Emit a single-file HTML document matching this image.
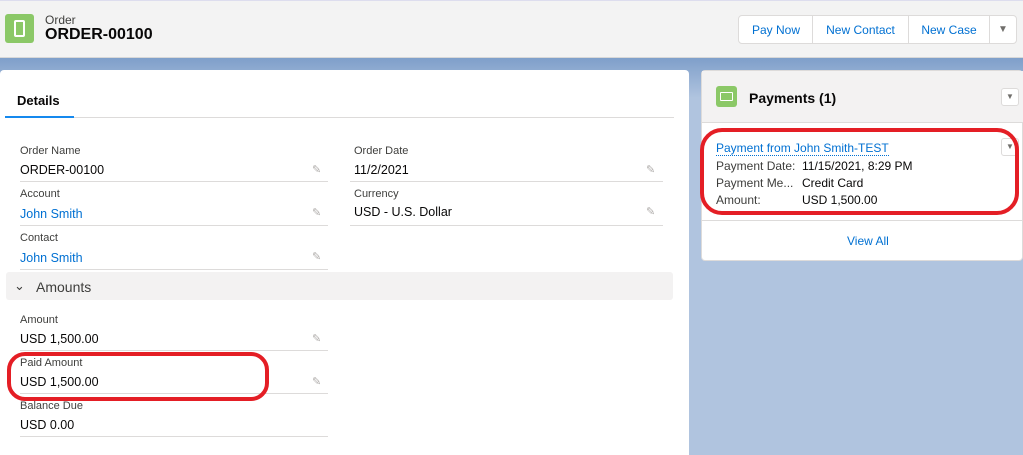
<!DOCTYPE html>
<html><head><style>
*{margin:0;padding:0;box-sizing:border-box}
body{width:1023px;height:455px;overflow:hidden;background:#b0c4df;font-family:"Liberation Sans",sans-serif;position:relative;color:#080707}
.abs{position:absolute}
.hdr{left:0;top:0;width:1023px;height:58px;background:#f3f3f3;border-bottom:1px solid #d8d8d8;border-top:1px solid #dde}
.lbl{font-size:11px;color:#3e3e3c}
.val{font-size:12.5px}
.lnk{color:#0070d2}
.line{height:1px;background:#dddbda}
.pen{font-size:11px;color:#b0adab}
.btn{top:15px;height:29px;background:#fff;border:1px solid #dddbda;font-size:12px;color:#0070d2;display:flex;align-items:center;justify-content:center}
</style></head><body>
<div class="abs" style="left:0;top:58px;width:1023px;height:40px;background:linear-gradient(#7f9fca,#b0c4df)"></div>
<div class="abs hdr"></div>
<div class="abs" style="left:5px;top:14px;width:29px;height:29px;background:#8bc867;border-radius:3px"></div>
<div class="abs" style="left:14px;top:20px;width:11px;height:17px;border:2px solid #fff;border-radius:2px"></div>
<div class="abs" style="left:45px;top:13px;font-size:12px;color:#3e3e3c">Order</div>
<div class="abs" style="left:45px;top:26px;font-size:16px;font-weight:bold">ORDER-00100</div>
<div class="abs btn" style="left:738px;width:76px;border-radius:4px 0 0 4px">Pay Now</div>
<div class="abs btn" style="left:812px;width:97px">New Contact</div>
<div class="abs btn" style="left:908px;width:82px">New Case</div>
<div class="abs btn" style="left:989px;width:28px;border-radius:0 4px 4px 0;color:#706e6b;font-size:10px">▼</div>

<div class="abs" style="left:0;top:70px;width:689px;height:385px;background:#fff;border-radius:4px 4px 0 0"></div>
<div class="abs" style="left:17px;top:93px;font-size:13px;font-weight:bold">Details</div>
<div class="abs line" style="left:5px;top:117px;width:669px"></div>
<div class="abs" style="left:5px;top:116px;width:69px;height:2px;background:#1589ee"></div>

<div class="abs lbl" style="left:20px;top:145px">Order Name</div>
<div class="abs val" style="left:20px;top:163px">ORDER-00100</div>
<div class="abs pen" style="left:312px;top:163px">✎</div>
<div class="abs line" style="left:20px;top:181px;width:308px"></div>
<div class="abs lbl" style="left:20px;top:188px">Account</div>
<div class="abs val lnk" style="left:20px;top:207px">John Smith</div>
<div class="abs pen" style="left:312px;top:206px">✎</div>
<div class="abs line" style="left:20px;top:225px;width:308px"></div>
<div class="abs lbl" style="left:20px;top:232px">Contact</div>
<div class="abs val lnk" style="left:20px;top:251px">John Smith</div>
<div class="abs pen" style="left:312px;top:250px">✎</div>
<div class="abs line" style="left:20px;top:269px;width:308px"></div>

<div class="abs lbl" style="left:354px;top:145px">Order Date</div>
<div class="abs val" style="left:354px;top:163px">11/2/2021</div>
<div class="abs pen" style="left:646px;top:163px">✎</div>
<div class="abs line" style="left:350px;top:181px;width:313px"></div>
<div class="abs lbl" style="left:354px;top:188px">Currency</div>
<div class="abs val" style="left:354px;top:205px">USD - U.S. Dollar</div>
<div class="abs pen" style="left:646px;top:205px">✎</div>
<div class="abs line" style="left:350px;top:225px;width:313px"></div>

<div class="abs" style="left:6px;top:272px;width:667px;height:28px;background:#f3f2f2;border-radius:3px"></div>
<div class="abs" style="left:14px;top:278px;font-size:13px;color:#3e3e3c">⌄</div>
<div class="abs" style="left:36px;top:279px;font-size:14px;color:#3e3e3c">Amounts</div>

<div class="abs lbl" style="left:20px;top:314px">Amount</div>
<div class="abs val" style="left:20px;top:332px">USD 1,500.00</div>
<div class="abs pen" style="left:312px;top:332px">✎</div>
<div class="abs line" style="left:20px;top:350px;width:308px"></div>
<div class="abs lbl" style="left:20px;top:357px">Paid Amount</div>
<div class="abs val" style="left:20px;top:375px">USD 1,500.00</div>
<div class="abs pen" style="left:312px;top:375px">✎</div>
<div class="abs line" style="left:20px;top:393px;width:308px"></div>
<div class="abs lbl" style="left:20px;top:400px">Balance Due</div>
<div class="abs val" style="left:20px;top:418px">USD 0.00</div>
<div class="abs line" style="left:20px;top:436px;width:308px"></div>
<div class="abs" style="left:7px;top:352px;width:262px;height:49px;border:4px solid #e41e25;border-radius:18px"></div>

<div class="abs" style="left:701px;top:70px;width:322px;height:191px;background:#fff;border:1px solid #dddbda;border-radius:4px"></div>
<div class="abs" style="left:702px;top:71px;width:321px;height:52px;background:#f3f2f2;border-bottom:1px solid #dddbda"></div>
<div class="abs" style="left:716px;top:86px;width:21px;height:21px;background:#8bc867;border-radius:3px"></div>
<div class="abs" style="left:720px;top:92px;width:13px;height:9px;border:1.5px solid #fff;border-radius:1px"></div>
<div class="abs" style="left:749px;top:90px;font-size:14px;font-weight:bold">Payments (1)</div>
<div class="abs" style="left:1001px;top:88px;width:18px;height:18px;border:1px solid #dddbda;border-radius:3px;background:#fff;font-size:8px;color:#706e6b;text-align:center;line-height:16px">▼</div>
<div class="abs" style="left:1001px;top:138px;width:18px;height:18px;border:1px solid #dddbda;border-radius:3px;background:#fff;font-size:8px;color:#706e6b;text-align:center;line-height:16px">▼</div>
<div class="abs" style="left:716px;top:141px;font-size:12px;color:#0070d2;border-bottom:1px dotted #0070d2">Payment from John Smith-TEST</div>
<div class="abs" style="left:716px;top:158px;font-size:12px;color:#3e3e3c;line-height:17px">Payment Date:<br>Payment Me...<br>Amount:</div>
<div class="abs" style="left:802px;top:158px;font-size:12px;line-height:17px">11/15/2021, 8:29 PM<br>Credit Card<br>USD 1,500.00</div>
<div class="abs" style="left:700px;top:128px;width:319px;height:87px;border:4px solid #e41e25;border-radius:22px"></div>
<div class="abs line" style="left:702px;top:220px;width:321px"></div>
<div class="abs" style="left:847px;top:234px;font-size:12px;color:#0070d2">View All</div>
</body></html>
